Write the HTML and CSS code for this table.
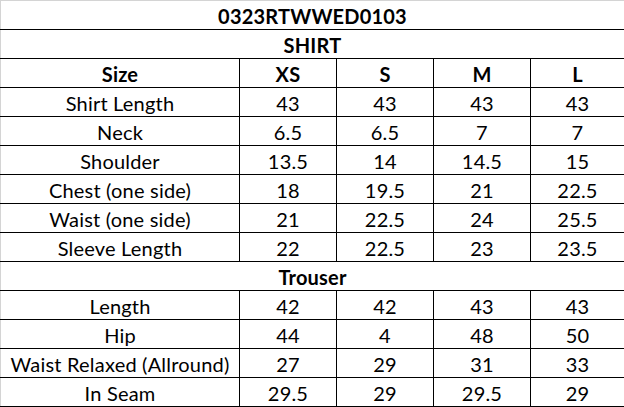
FILE: index.html
```html
<!DOCTYPE html>
<html>
<head>
<meta charset="utf-8">
<link rel="stylesheet" href="styles.css">
</head>
<body>
<table class="size-table">
  <colgroup>
    <col class="c-label"><col class="c-size"><col class="c-size"><col class="c-size"><col class="c-last">
  </colgroup>
  <tr class="title"><td colspan="5" class="b">0323RTWWED0103</td></tr>
  <tr><td colspan="5" class="b">SHIRT</td></tr>
  <tr class="b"><td>Size</td><td>XS</td><td>S</td><td>M</td><td>L</td></tr>
  <tr><td>Shirt Length</td><td>43</td><td>43</td><td>43</td><td>43</td></tr>
  <tr><td>Neck</td><td>6.5</td><td>6.5</td><td>7</td><td>7</td></tr>
  <tr><td>Shoulder</td><td>13.5</td><td>14</td><td>14.5</td><td>15</td></tr>
  <tr><td>Chest (one side)</td><td>18</td><td>19.5</td><td>21</td><td>22.5</td></tr>
  <tr><td>Waist (one side)</td><td>21</td><td>22.5</td><td>24</td><td>25.5</td></tr>
  <tr><td>Sleeve Length</td><td>22</td><td>22.5</td><td>23</td><td>23.5</td></tr>
  <tr><td colspan="5" class="b">Trouser</td></tr>
  <tr><td>Length</td><td>42</td><td>42</td><td>43</td><td>43</td></tr>
  <tr><td>Hip</td><td>44</td><td>4</td><td>48</td><td>50</td></tr>
  <tr><td>Waist Relaxed (Allround)</td><td>27</td><td>29</td><td>31</td><td>33</td></tr>
  <tr><td>In Seam</td><td>29.5</td><td>29</td><td>29.5</td><td>29</td></tr>
</table>
</body>
</html>
```
FILE: styles.css
```css
html, body {
  margin: 0;
  padding: 0;
  background: #fff;
}
.size-table {
  border-collapse: collapse;
  table-layout: fixed;
  width: 623px;
  font-family: Lato, "Open Sans", sans-serif;
  font-size: 20px;
  letter-spacing: 0.2px;
  color: #000;
}
.c-label { width: 239px; }
.c-size { width: 97px; }
.c-last { width: 94px; }
.size-table tr { height: 29px; }
.size-table td {
  border: 1px solid #000;
  height: 27px;
  padding: 1px 0 0;
  text-align: center;
  vertical-align: middle;
  line-height: 26px;
  white-space: nowrap;
  overflow: hidden;
}
.size-table tr:first-child td { border-top: 1px solid #d4d4d4; }
.size-table td:first-child { border-left: 1px solid #d4d4d4; }
.b { font-weight: bold; }
```
